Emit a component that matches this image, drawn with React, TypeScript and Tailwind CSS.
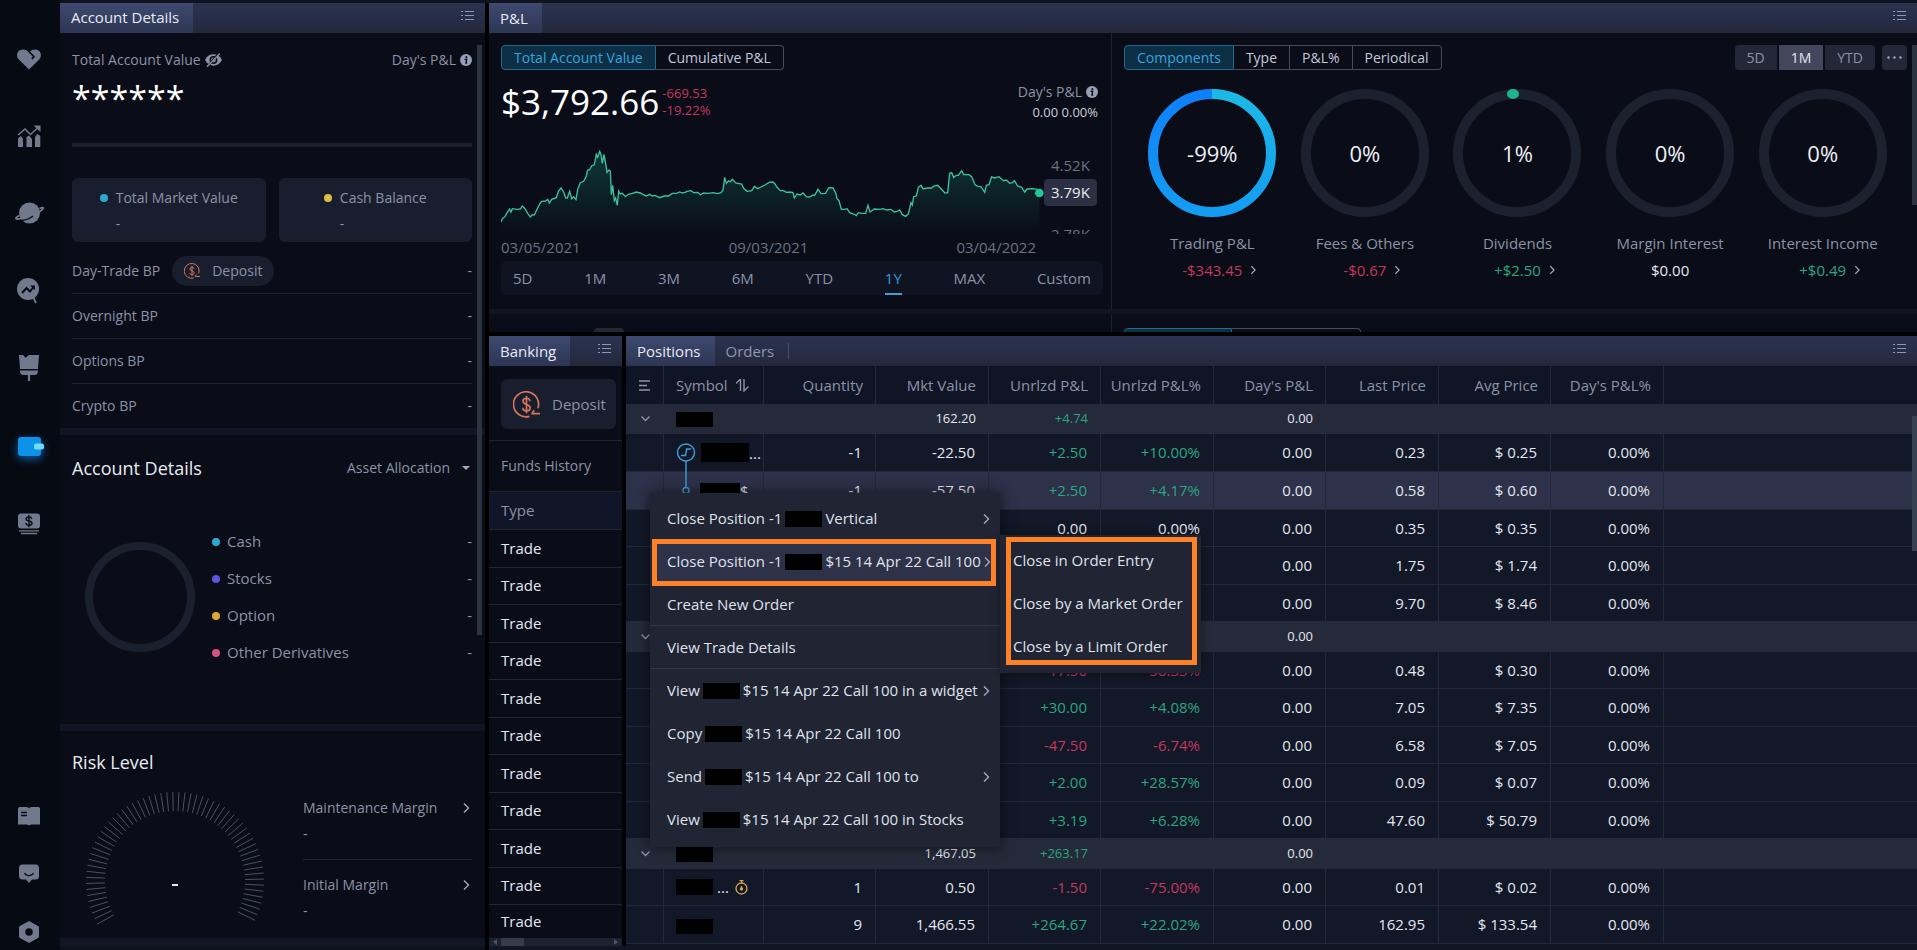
import { useState, type ReactNode } from "react";
import clsx from "clsx";

type Tone = "up" | "down" | "flat";

interface PositionRow {
  kind: "row";
  symbol?: ReactNode;
  quantity?: string;
  mktValue?: string;
  pnl?: string;
  pnlPct?: string;
  last: string;
  avg: string;
  selected?: boolean;
}

interface GroupRow {
  kind: "group";
  mktValue?: string;
  pnl?: string;
}

const toneOf = (value = ""): Tone => (value.startsWith("+") ? "up" : value.startsWith("-") ? "down" : "flat");

const toneClass: Record<Tone, string> = {
  up: "text-[#2aa680]",
  down: "text-[#c4375f]",
  flat: "text-[#e4e7f0]",
};

function Redacted({ className = "h-4 w-[37px]" }: { className?: string }) {
  return <span className={clsx("inline-block shrink-0 bg-black", className)} />;
}

function ListIcon() {
  return (
    <svg width="13" height="11" viewBox="0 0 13 11" stroke="#8e97b8" strokeWidth="1.2">
      <path d="M0 1.5h2M4 1.5h9M0 5.5h2M4 5.5h9M0 9.5h2M4 9.5h9" />
    </svg>
  );
}

function Chevron({ size = 12 }: { size?: number }) {
  return (
    <svg width={size} height={size} viewBox="0 0 12 12" fill="none" stroke="#a2a9bd" strokeWidth="1.4" className="shrink-0">
      <path d="M4 1.5 8.5 6 4 10.5" />
    </svg>
  );
}

function InfoIcon() {
  return (
    <svg width="12" height="12" viewBox="0 0 12 12" className="shrink-0">
      <circle cx="6" cy="6" r="6" fill="#98a0b8" />
      <circle cx="6.4" cy="3" r="1" fill="#0a0d18" />
      <path d="M4.6 5.2h2L6 9h1.2" fill="none" stroke="#0a0d18" strokeWidth="1.4" />
    </svg>
  );
}

function EyeOffIcon() {
  return (
    <svg width="17" height="14" viewBox="0 0 17 14" className="shrink-0">
      <path d="M0 7C2 3 5 1.3 8.5 1.3S15 3 17 7c-2 4-5 5.7-8.5 5.7S2 11 0 7Z" fill="#8b92a6" />
      <circle cx="8.5" cy="7" r="3.9" fill="#0a0d18" />
      <circle cx="8.5" cy="7" r="2.4" fill="#8b92a6" />
      <path d="M13.500.8 2.800 13.200" stroke="#0a0d18" strokeWidth="2.200" />
      <path d="M14.800.5 2 13.800" stroke="#8b92a6" strokeWidth="1.4" />
    </svg>
  );
}

function DepositIcon({ size }: { size: number }) {
  return (
    <svg width={size} height={size} viewBox="0 0 28 28" fill="none" stroke="#d8775a" strokeWidth="1.7" className="shrink-0">
      <path d="M17 26.300A13 13 0 1 1 25.800 18" />
      <path d="M17.500 10.500c0-2-1.500-3-3.500-3s-3.600 1-3.600 3c0 4.200 7.400 2.600 7.400 6.800 0 2-1.600 3.200-3.800 3.200s-3.800-1.200-3.800-3.200M14 5v18" />
      <path d="M20 22.500l2-2.500M19 23.500h9" />
    </svg>
  );
}

function Dot({ className }: { className: string }) {
  return <span className={clsx("size-2 shrink-0 rounded-full", className)} />;
}

/* ---------- sidebar ---------- */

const topNav: { label: string; icon: ReactNode }[] = [
  {
    label: "Watchlist",
    icon: (
      <>
        <path d="M12 22.500 1.800 12.500C-1.800 8.500.500 2.500 6 2.500c2.500 0 4.500 1 6 3 1.500-2 3.500-3 6-3 5.500 0 7.800 6 4.200 10Z" />
        <path d="m12 4.500 5 5.300-2.200 2" fill="none" stroke="#060a12" strokeWidth="1.600" />
      </>
    ),
  },
  {
    label: "Markets",
    icon: (
      <>
        <path d="M1 14.500 3.500 12 6 14.500V23H1ZM9.500 13 12 11.500 15 15v8H9.500ZM18 13l2.500-3 2.800 2V23H18Z" />
        <path d="m1 11 7-6 5.500 5.500L21 3.500" fill="none" stroke="#717a8d" strokeWidth="1.500" />
        <path d="M16.500 1.500H23.500V8Z" />
      </>
    ),
  },
  {
    label: "Explore",
    icon: (
      <>
        <circle cx="12.500" cy="12" r="10.500" />
        <path d="M2.500 14.500C-1 16-2.500 18 .500 18c4.500 0 9-1.500 14-3.500M22.500 7.500c3-1.500 5-1.200 3 .8-.8 1-1.800 1.700-3 2.400" fill="none" stroke="#717a8d" strokeWidth="1.800" />
        <path d="M3 19.300c5 .2 9.500-1.500 13-4.300" fill="none" stroke="#060a12" strokeWidth="1.200" />
      </>
    ),
  },
  {
    label: "Analysis",
    icon: (
      <>
        <circle cx="11" cy="11" r="11" />
        <path d="m16.500 20 2.500 5" stroke="#717a8d" strokeWidth="1.800" />
        <path d="m5 15 4.500-5 3.500 3.500 4-5" fill="none" stroke="#060a12" strokeWidth="2" />
        <path d="M13 7.500h5V12Z" fill="#060a12" />
      </>
    ),
  },
  {
    label: "Screener",
    icon: (
      <>
        <path d="M2 0h4l2.500 2.800L12 0h10l-1 14H3ZM3 15.500h18c0 3.500-1.500 4.500-4 4.500H7c-2.500 0-4-1-4-4.500Z" />
        <path d="M12 19v7" stroke="#717a8d" strokeWidth="2.200" />
      </>
    ),
  },
  {
    label: "Account",
    icon: (
      <>
        <rect x="1" y="5" width="23" height="19" rx="3" fill="#0d92ea" />
        <rect x="17" y="11.500" width="10" height="6" rx="2" fill="#6fdcff" />
      </>
    ),
  },
  {
    label: "Trade",
    icon: (
      <>
        <rect x="1" y="4.500" width="22" height="15" rx="3" />
        <path d="M2 21.800h20M4 24.500h16" stroke="#717a8d" strokeWidth="1.300" />
        <path d="M14.800 9.800c-.3-1.300-1.300-1.900-2.800-1.900s-2.800.7-2.800 2c0 2.800 5.800 1.500 5.800 4.300 0 1.300-1.300 2-3 2s-3-.7-3.200-2.200M12 6v12.200" fill="none" stroke="#060a12" strokeWidth="1.400" />
      </>
    ),
  },
];

const bottomNav: { label: string; icon: ReactNode }[] = [
  {
    label: "News",
    icon: (
      <>
        <path d="M1 5c0-1.500 1-2 3-2h5c1.500 0 2.500.5 3 1.500C12.500 3.500 13.500 3 15 3h5c2 0 3 .5 3 2v15.500h-9l-2 1-2-1H1Z" />
        <path d="M4 8.500h6M4 11.500h6" stroke="#060a12" strokeWidth="1.300" />
      </>
    ),
  },
  {
    label: "Messages",
    icon: (
      <>
        <path d="M2 6c0-2.500 1.500-3.500 3.500-3.500h13C20.500 2.500 22 3.500 22 6v8c0 2.500-1.500 3.500-3.500 3.500H15L12 21l-3-3.500H5.500C3.500 17.500 2 16.500 2 14Z" />
        <path d="M7.500 11c2 3.500 7 3.500 9 0" fill="none" stroke="#060a12" strokeWidth="1.400" />
      </>
    ),
  },
  {
    label: "Settings",
    icon: (
      <>
        <path d="M12 1 21 6c.8.4 1 1 1 1.500v9c0 .6-.3 1.200-1 1.500l-9 5-9-5c-.7-.4-1-1-1-1.500v-9C2 6.900 2.300 6.300 3 6Z" />
        <circle cx="12" cy="12" r="3.800" fill="#060a12" />
      </>
    ),
  },
];

function NavIcon({ children, active }: { children: ReactNode; active?: boolean }) {
  return (
    <svg
      width="24"
      height="24"
      viewBox="0 0 24 24"
      fill="#717a8d"
      className={clsx("overflow-visible", active && "drop-shadow-[0_3px_4px_#0a5aa0]")}
    >
      {children}
    </svg>
  );
}

function Sidebar() {
  return (
    <nav className="flex w-[60px] shrink-0 flex-col justify-between bg-[#060a12] pt-5 pr-0.5 pb-1.5">
      <div className="flex flex-col">
        {topNav.map((n) => (
          <button key={n.label} aria-label={n.label} className="flex h-[77px] items-center justify-center">
            <NavIcon active={n.label === "Account"}>{n.icon}</NavIcon>
          </button>
        ))}
      </div>
      <div className="flex flex-col items-center gap-[34px]">
        {bottomNav.map((n) => (
          <button key={n.label} aria-label={n.label}>
            <NavIcon>{n.icon}</NavIcon>
          </button>
        ))}
      </div>
    </nav>
  );
}

/* ---------- shared panel pieces ---------- */

function PanelHeader({ tabs }: { tabs: string[] }) {
  return (
    <header className="flex h-[30px] shrink-0 items-center justify-between bg-linear-to-b from-[#2a3350] to-[#24283d] pr-[11px]">
      <div className="flex h-full items-center">
        {tabs.map((tab, i) => (
          <button
            key={tab}
            className={clsx(
              "flex h-full items-center pr-3.5 pl-[11px] text-[15px]",
              i === 0 ? "bg-linear-to-b from-[#3e4a70] to-[#2c3553] text-[#e8ebf5]" : "text-[#8f97b3]"
            )}
          >
            {tab}
          </button>
        ))}
        {tabs.length > 1 && <span className="h-4 w-px bg-[#454d68]" />}
      </div>
      <button aria-label="Panel menu" className="pb-1.5">
        <ListIcon />
      </button>
    </header>
  );
}

function Segmented({ items }: { items: string[] }) {
  const [active, setActive] = useState(items[0]);
  return (
    <div className="flex h-[25px] text-sm">
      {items.map((item) => (
        <button
          key={item}
          onClick={() => setActive(item)}
          className={clsx(
            "border px-3 leading-[23px] not-first:border-l-0 first:rounded-l last:rounded-r",
            item === active ? "border-[#23698a] bg-[#0c2f46] text-[#37a3dc]" : "border-[#474c5e] text-[#c3c8d8]"
          )}
        >
          {item}
        </button>
      ))}
    </div>
  );
}

/* ---------- account details ---------- */

const allocation = [
  { name: "Cash", dot: "bg-[#28abd3]" },
  { name: "Stocks", dot: "bg-[#5d55e0]" },
  { name: "Option", dot: "bg-[#dba92b]" },
  { name: "Other Derivatives", dot: "bg-[#d8527f]" },
];

function RiskGauge() {
  const ticks = Array.from({ length: 61 }, (_, i) => ((-209 + i * 3.92) * Math.PI) / 180);
  return (
    <svg width="182" height="142" viewBox="0 0 182 142" className="shrink-0">
      {ticks.map((a) => (
        <line
          key={a}
          x1={91 + 70 * Math.cos(a)}
          y1={91 + 70 * Math.sin(a)}
          x2={91 + 89 * Math.cos(a)}
          y2={91 + 89 * Math.sin(a)}
          stroke="#4a5160"
          strokeWidth="1"
        />
      ))}
      <path d="M88 95h6" stroke="#e4e7f0" strokeWidth="2" />
    </svg>
  );
}

function AccountPanel() {
  return (
    <section className="relative flex w-[425px] shrink-0 flex-col bg-[#0a0d18] text-sm text-[#8b92a6]">
      <PanelHeader tabs={["Account Details"]} />
      <span className="absolute top-[42px] right-[3px] h-[590px] w-[5px] bg-[#2b3341]" />

      <div className="pt-[17px] pr-[13px] pl-3">
        <div className="flex items-center justify-between">
          <span className="flex items-center gap-1">
            Total Account Value <EyeOffIcon />
          </span>
          <span className="flex items-center gap-1">
            Day's P&amp;L <InfoIcon />
          </span>
        </div>
        <p className="mt-[7px] text-[34px] leading-[42px] text-white">******</p>
        <div className="mt-6 h-1 bg-[#1b202d]" />

        <div className="mt-[31px] grid grid-cols-2 gap-[13px]">
          {[
            { name: "Total Market Value", dot: "bg-[#28abd3]" },
            { name: "Cash Balance", dot: "bg-[#dcbc45]" },
          ].map((c) => (
            <div key={c.name} className="flex h-16 justify-center gap-2 rounded-md bg-[#191e2f] pt-2.5">
              <span className="flex h-5 items-center">
                <Dot className={c.dot} />
              </span>
              <div className="flex flex-col gap-1.5">
                <span>{c.name}</span>
                <span>-</span>
              </div>
            </div>
          ))}
        </div>

        <div className="mt-[7px]">
          {["Day-Trade BP", "Overnight BP", "Options BP", "Crypto BP"].map((row, i) => (
            <div key={row} className="flex h-[45px] items-center border-b border-[#1e2330] last:h-11 last:border-b-0">
              <span>{row}</span>
              {i === 0 && (
                <button className="ml-3 flex h-[30px] items-center gap-3 rounded-full bg-[#191e2f] px-3">
                  <DepositIcon size={16} />
                  Deposit
                </button>
              )}
              <span className="ml-auto">-</span>
            </div>
          ))}
        </div>
      </div>

      <div className="h-[7px] bg-[#111525]" />
      <div className="pt-[21px] pr-[13px] pb-[53px] pl-3">
        <div className="flex items-center justify-between">
          <h2 className="text-lg leading-6 text-[#e8ebf3]">Account Details</h2>
          <label className="flex items-center gap-3">
            <select aria-label="Breakdown" className="appearance-none bg-transparent text-right">
              <option>Asset Allocation</option>
            </select>
            <svg width="8" height="4" viewBox="0 0 8 4" fill="#a2a9bd" className="mr-0.5">
              <path d="M0 0h8L4 4Z" />
            </svg>
          </label>
        </div>
        <div className="mt-[43px] flex items-center pl-[13px]">
          <svg width="110" height="110" viewBox="0 0 110 110" fill="none" className="mr-[17px] shrink-0">
            <circle cx="55" cy="55" r="51" stroke="#1a202e" strokeWidth="8" />
          </svg>
          <ul className="flex-1 text-[15px]">
            {allocation.map((a) => (
              <li key={a.name} className="flex h-[37px] items-center gap-[7px]">
                <Dot className={a.dot} />
                <span>{a.name}</span>
                <span className="ml-auto">-</span>
              </li>
            ))}
          </ul>
        </div>
      </div>

      <div className="h-[7px] bg-[#111525]" />
      <div className="pt-[19px] pr-[13px] pb-1.5 pl-3">
        <h2 className="text-lg leading-6 text-[#e8ebf3]">Risk Level</h2>
        <div className="mt-4 flex pl-3">
          <RiskGauge />
          <ul className="ml-[37px] flex-1 pt-2">
            {["Maintenance Margin", "Initial Margin"].map((m) => (
              <li key={m} className="border-[#232836] first:border-b first:pb-[15px] last:pt-[15px]">
                <a href="#" className="flex items-center justify-between">
                  {m} <Chevron />
                </a>
                <p className="mt-1.5">-</p>
              </li>
            ))}
          </ul>
        </div>
      </div>
      <div className="flex-1 border-b-4 border-[#0d121e] bg-[#111525]" />
    </section>
  );
}

/* ---------- P&L ---------- */

const curve =
  "4,246 8,236 16,230 22,218 30,207 34,216 38,206 52,208 62,207 68,198 76,206 84,220 92,231 98,224 104,225 112,208 120,192 126,184 138,183 144,178 149,189 156,178 170,173 176,154 184,144 192,156 198,174 203,174 210,154 216,176 222,170 229,179 234,148 242,128 252,124 260,108 264,90 270,89 276,78 284,74 290,43 294,52 300,34 304,44 308,70 313,43 318,70 322,97 328,90 332,93 335,164 339,136 344,182 348,174 353,196 357,153 362,162 368,160 377,170 386,163 398,160 410,156 422,159 430,163 440,168 450,163 458,168 466,166 480,173 494,168 506,168 518,160 530,160 540,156 548,159 556,157 562,154 574,152 582,158 594,157 602,164 612,159 626,160 640,158 654,161 664,158 670,150 675,112 680,130 686,123 692,125 698,118 708,129 726,132 732,145 742,154 756,152 764,139 774,146 784,141 796,135 808,127 820,126 826,132 832,142 842,152 852,152 860,157 870,156 880,158 884,174 892,162 902,165 910,159 920,170 930,171 940,165 945,166 950,157 955,148 964,161 978,160 983,150 988,143 1000,144 1008,158 1012,176 1018,182 1025,208 1034,208 1042,206 1050,218 1062,222 1070,227 1076,218 1086,220 1098,220 1105,196 1111,216 1124,207 1140,208 1150,206 1160,210 1174,208 1184,216 1192,214 1200,210 1208,224 1218,229 1226,222 1234,188 1238,195 1242,170 1250,168 1256,142 1264,136 1270,146 1286,144 1296,144 1302,138 1314,136 1322,144 1336,159 1344,158 1350,100 1356,98 1362,112 1370,106 1376,106 1386,92 1392,104 1408,104 1416,110 1426,134 1434,139 1444,140 1455,157 1460,136 1468,134 1476,110 1484,114 1498,110 1502,114 1512,122 1520,120 1530,130 1538,128 1544,122 1554,138 1566,142 1575,156 1582,147 1598,146 1612,148 1619,158";

function ValueChart() {
  return (
    <svg width="543" height="100" viewBox="4 0 1629 300" className="min-w-0 shrink overflow-visible" aria-label="Account value, one year">
      <defs>
        <linearGradient id="curve-fill" x1="0" y1="0" x2="0" y2="1">
          <stop offset="0" stopColor="#17a07c" stopOpacity="0.3" />
          <stop offset="1" stopColor="#17a07c" stopOpacity="0" />
        </linearGradient>
      </defs>
      <polygon points={`4,275 ${curve} 1619,275`} fill="url(#curve-fill)" />
      <polyline points={curve} fill="none" stroke="#3fc0a0" strokeWidth="4" />
      <circle cx="1619" cy="159" r="13" fill="#1fc79b" />
    </svg>
  );
}

function AccountValue() {
  const ranges = ["5D", "1M", "3M", "6M", "YTD", "1Y", "MAX", "Custom"];
  return (
    <div className="w-[622px] shrink-0 pt-3 pr-2 pl-3">
      <div className="flex">
        <Segmented items={["Total Account Value", "Cumulative P&L"]} />
      </div>
      <div className="mt-[11px] flex h-[42px] items-center pr-[5px]">
        <span className="text-[35px] leading-[42px] text-white">$3,792.66</span>
        <div className="ml-[3px] text-[13px] leading-[17px] text-[#c4375f]">
          <p>-669.53</p>
          <p>-19.22%</p>
        </div>
        <div className="ml-auto text-right text-[13px] leading-5">
          <p className="flex items-center justify-end gap-1 text-sm text-[#8b92a6]">
            Day's P&amp;L <InfoIcon />
          </p>
          <p className="text-[#c9cedd]">0.00 0.00%</p>
        </div>
      </div>
      <div className="mt-[17px] flex h-[94px] overflow-hidden">
        <ValueChart />
        <div className="flex shrink-0 flex-col items-center text-[15px] text-[#6a7183]">
          <span className="mt-4 leading-[18px]">4.52K</span>
          <span className="mt-[5px] rounded bg-[#2c3042] px-[7px] leading-[27px] text-[#e8ebf3]">3.79K</span>
          <span className="mt-[18px] leading-5">2.78K</span>
        </div>
      </div>
      <div className="mt-[3px] flex w-[535px] justify-between text-[15px] leading-5 text-[#6a7183]">
        <span>03/05/2021</span>
        <span>09/03/2021</span>
        <span>03/04/2022</span>
      </div>
      <div className="mt-1 flex h-[34px] justify-between rounded-md bg-[#101422] px-3 text-[15px] text-[#8b92a6]">
        {ranges.map((r) => (
          <button
            key={r}
            className={clsx("border-y-2 border-t-transparent", r === "1Y" ? "border-b-[#4c9bd0] text-[#2f9bd8]" : "border-b-transparent")}
          >
            {r}
          </button>
        ))}
      </div>
    </div>
  );
}

const components = [
  { label: "Trading P&L", pct: "-99%", value: "-$343.45", link: true },
  { label: "Fees & Others", pct: "0%", value: "-$0.67", link: true },
  { label: "Dividends", pct: "1%", value: "+$2.50", link: true },
  { label: "Margin Interest", pct: "0%", value: "$0.00", link: false },
  { label: "Interest Income", pct: "0%", value: "+$0.49", link: true },
];

function Ring({ pct }: { pct: string }) {
  return (
    <div className="relative">
      <svg width="130" height="130" viewBox="0 0 130 130" fill="none">
        <defs>
          <linearGradient id="ring-right" x1="0" y1="0" x2="0" y2="1">
            <stop offset="0" stopColor="#1cb9e6" />
            <stop offset="1" stopColor="#149cf2" />
          </linearGradient>
          <linearGradient id="ring-left" x1="0" y1="0" x2="0" y2="1">
            <stop offset="0" stopColor="#0f80fb" />
            <stop offset="1" stopColor="#149cf2" />
          </linearGradient>
        </defs>
        <circle cx="65" cy="65" r="59" stroke="#1b212e" strokeWidth="10" />
        {pct === "-99%" && (
          <>
            <path d="M65 6a59 59 0 0 1 0 118" stroke="url(#ring-right)" strokeWidth="10" />
            <path d="M65 124a59 59 0 0 1 0-118" stroke="url(#ring-left)" strokeWidth="10" />
          </>
        )}
        {pct === "1%" && <ellipse cx="61" cy="6" rx="6" ry="5" fill="#1fb58b" />}
      </svg>
      <span className="absolute inset-0 flex items-center justify-center text-[22px] text-[#eef0f6]">{pct}</span>
    </div>
  );
}

function Components() {
  return (
    <div className="relative min-w-0 flex-1 border-l border-[#1d2231] pt-3 pr-2.5 pl-3">
      <span className="absolute top-3 right-0 h-40 w-[5px] bg-[#2b3341]" />
      <div className="flex items-center justify-between">
        <Segmented items={["Components", "Type", "P&L%", "Periodical"]} />
        <div className="flex gap-[7px] text-sm leading-[25px] text-[#8b92a6]">
          <div className="flex gap-0.5 overflow-hidden rounded">
            <button className="bg-[#232737] px-3">5D</button>
            <button className="bg-[#42475c] px-3 text-[#e4e7f0]">1M</button>
            <button className="bg-[#232737] px-3">YTD</button>
          </div>
          <button aria-label="More" className="flex w-[25px] items-center justify-center rounded bg-[#232737]">
            <svg width="15" height="3" viewBox="0 0 15 3" fill="#a2a9bd">
              <circle cx="1.500" cy="1.500" r="1.200" />
              <circle cx="7.500" cy="1.500" r="1.200" />
              <circle cx="13.500" cy="1.500" r="1.200" />
            </svg>
          </button>
        </div>
      </div>
      <div className="mt-[18px] grid grid-cols-5 pr-2 pl-3 text-[15px] leading-5">
        {components.map((c) => (
          <div key={c.label} className="flex flex-col items-center">
            <Ring pct={c.pct} />
            <span className="mt-[15px] whitespace-nowrap text-[#8b92a6]">{c.label}</span>
            <a href="#" className={clsx("relative mt-[7px]", toneClass[toneOf(c.value)])}>
              {c.value}
              {c.link && (
                <span className="absolute top-[5px] left-full ml-1.5">
                  <Chevron size={10} />
                </span>
              )}
            </a>
          </div>
        ))}
      </div>
    </div>
  );
}

function PnlPanel() {
  return (
    <section className="bg-[#0a0d18]">
      <PanelHeader tabs={["P&L"]} />
      <div className="h-[299px] overflow-hidden">
        <div className="flex h-[276px]">
          <AccountValue />
          <Components />
        </div>
        <div className="h-[5px] bg-[#101423]" />
        <div className="flex h-16">
          <div className="w-[622px] shrink-0 pt-3.5 pl-[105px]">
            <div className="h-7 w-[30px] rounded bg-[#232737]" />
          </div>
          <div className="flex flex-1 border-l border-[#1d2231] pt-3.5 pl-3">
            <div className="h-7 w-[108px] rounded-l border border-[#23698a] bg-[#0c2f46]" />
            <div className="h-7 w-[129px] rounded-r border border-l-0 border-[#474c5e]" />
          </div>
        </div>
      </div>
    </section>
  );
}

/* ---------- banking ---------- */

function BankingPanel() {
  return (
    <section className="flex w-[133px] shrink-0 flex-col bg-[#0a0d18]">
      <PanelHeader tabs={["Banking"]} />
      <div className="border-b border-[#1e2330] pt-[13px] pr-1.5 pb-[11px] pl-3">
        <button className="flex h-[50px] w-full items-center gap-3 rounded-md bg-[#191e2f] pl-3 text-[15px] text-[#8b92a6]">
          <DepositIcon size={27} />
          Deposit
        </button>
      </div>
      <p className="border-b border-[#1e2330] pl-3 text-sm leading-[50px] text-[#8b92a6]">Funds History</p>
      <table className="w-full text-left text-[15px]">
        <thead>
          <tr>
            <th className="h-[37px] bg-[#101527] pl-3 font-normal text-[#8b92a6]">Type</th>
          </tr>
        </thead>
        <tbody>
          {Array.from({ length: 11 }, (_, i) => (
            <tr key={i} className="group">
              <td className="h-[38px] border-t border-[#222736] pl-3 text-[#e4e7f0] group-even:h-[37px] group-last:h-[34px]">
                Trade
              </td>
            </tr>
          ))}
        </tbody>
      </table>
      <div className="mt-auto flex h-2 items-center bg-[#1b2231]">
        <svg width="12" height="8" viewBox="0 0 12 8" fill="#4a5365">
          <path d="M8 1v6L4 4Z" />
        </svg>
        <span className="h-full w-[23px] bg-[#343d4c]" />
        <svg width="12" height="8" viewBox="0 0 12 8" fill="#4a5365" className="ml-auto">
          <path d="M4 1v6l4-3Z" />
        </svg>
      </div>
    </section>
  );
}

/* ---------- positions ---------- */

const spreadLeg = (
  <span className="flex items-center gap-1.5">
    <svg width="19" height="37" viewBox="0 0 19 37" fill="none" stroke="#3f9fd6" strokeWidth="1.400" className="shrink-0 overflow-visible">
      <circle cx="10" cy="18.500" r="8.500" />
      <path d="M5 21.500h4.500l1.200-6.500H15" />
      <path d="M10 27V53" />
      <circle cx="10" cy="56.500" r="3" />
    </svg>
    <span className="flex items-center">
      <Redacted className="h-[19px] w-12" />
      ...
    </span>
  </span>
);

const secondLeg = (
  <span className="flex items-center pl-6">
    <Redacted className="h-4 w-10" />$
  </span>
);

const expiring = (
  <span className="flex items-center gap-1">
    <Redacted />
    ...
    <svg width="13" height="15" viewBox="0 0 13 15" fill="none" stroke="#d7a452" strokeWidth="1.300" className="ml-0.5">
      <circle cx="6.500" cy="8.500" r="5.500" />
      <path d="M4.500.7h4M6.500 1v2M6.500 6v2.500" />
      <circle cx="6.500" cy="9" r="1" fill="#d7a452" />
    </svg>
  </span>
);

const block = <Redacted className="h-[15px] w-[37px] align-middle" />;

const rows: (PositionRow | GroupRow)[] = [
  { kind: "group", mktValue: "162.20", pnl: "+4.74" },
  { kind: "row", symbol: spreadLeg, quantity: "-1", mktValue: "-22.50", pnl: "+2.50", pnlPct: "+10.00%", last: "0.23", avg: "0.25" },
  { kind: "row", symbol: secondLeg, quantity: "-1", mktValue: "-57.50", pnl: "+2.50", pnlPct: "+4.17%", last: "0.58", avg: "0.60", selected: true },
  { kind: "row", pnl: "0.00", pnlPct: "0.00%", last: "0.35", avg: "0.35" },
  { kind: "row", last: "1.75", avg: "1.74" },
  { kind: "row", last: "9.70", avg: "8.46" },
  { kind: "group" },
  { kind: "row", pnl: "-17.50", pnlPct: "-58.33%", last: "0.48", avg: "0.30" },
  { kind: "row", pnl: "+30.00", pnlPct: "+4.08%", last: "7.05", avg: "7.35" },
  { kind: "row", pnl: "-47.50", pnlPct: "-6.74%", last: "6.58", avg: "7.05" },
  { kind: "row", pnl: "+2.00", pnlPct: "+28.57%", last: "0.09", avg: "0.07" },
  { kind: "row", pnl: "+3.19", pnlPct: "+6.28%", last: "47.60", avg: "50.79" },
  { kind: "group", mktValue: "1,467.05", pnl: "+263.17" },
  { kind: "row", symbol: expiring, quantity: "1", mktValue: "0.50", pnl: "-1.50", pnlPct: "-75.00%", last: "0.01", avg: "0.02" },
  { kind: "row", symbol: block, quantity: "9", mktValue: "1,466.55", pnl: "+264.67", pnlPct: "+22.02%", last: "162.95", avg: "133.54" },
];

const headings = ["Quantity", "Mkt Value", "Unrlzd P&L", "Unrlzd P&L%", "Day's P&L", "Last Price", "Avg Price", "Day's P&L%"];

const cell = "border-r border-b border-[#232939] pr-[13px]";

function PositionsTable() {
  return (
    <table className="w-full table-fixed border-separate border-spacing-0 text-right text-[15px] text-[#e4e7f0]">
      <colgroup>
        <col className="w-[38px]" />
        <col className="w-[100px]" />
        {headings.map((h, i) => (
          <col key={h} className={i % 2 ? "w-[113px]" : "w-[112px]"} />
        ))}
        <col />
      </colgroup>
      <thead className="bg-[#101526] text-[#8b92a6]">
        <tr>
          <th className="h-[38px] border-r border-[#232939]" aria-label="Expand">
            <svg width="11" height="11" viewBox="0 0 11 11" stroke="#8e95a9" strokeWidth="1.300" className="mx-auto">
              <path d="M0 1h11M0 5.500h8M0 10h11" />
            </svg>
          </th>
          <th className="border-r border-[#232939] pl-3 text-left font-normal">
            <span className="flex items-center gap-2">
              Symbol
              <svg width="13" height="13" viewBox="0 0 13 13" fill="none" stroke="#8e95a9" strokeWidth="1.400">
                <path d="M0 4.500 4.500 0V12M8 0v12l4.500-4.500" />
              </svg>
            </span>
          </th>
          {headings.map((h) => (
            <th key={h} className="border-r border-[#232939] pr-3 font-normal whitespace-nowrap">
              {h}
            </th>
          ))}
          <th />
        </tr>
      </thead>
      <tbody>
        {rows.map((r, i) =>
          r.kind === "group" ? (
            <tr key={i} className="bg-[#242a39] text-[13px]">
              <td className="h-[30px]">
                <svg width="9" height="6" viewBox="0 0 9 6" fill="none" stroke="#8e95a9" strokeWidth="1.300" className="mx-auto">
                  <path d="m.5.5 4 4 4-4" />
                </svg>
              </td>
              <td className="pl-3 text-left">{r.mktValue && block}</td>
              <td />
              <td className="pr-[13px]">{r.mktValue}</td>
              <td className={clsx("pr-[13px]", toneClass[toneOf(r.pnl)])}>{r.pnl}</td>
              <td />
              <td className="pr-[13px]">0.00</td>
              <td colSpan={4} />
            </tr>
          ) : (
            <tr key={i} className={clsx("group", r.selected ? "bg-[#2d3149]" : "bg-[#121827]")}>
              <td className="h-[38px] border-r border-b border-[#232939] group-even:h-[37px]" />
              <td className="border-r border-b border-[#232939] py-0 pl-3 text-left leading-5">{r.symbol}</td>
              <td className={cell}>{r.quantity}</td>
              <td className={cell}>{r.mktValue}</td>
              <td className={clsx(cell, toneClass[toneOf(r.pnl)])}>{r.pnl}</td>
              <td className={clsx(cell, toneClass[toneOf(r.pnlPct)])}>{r.pnlPct}</td>
              <td className={cell}>0.00</td>
              <td className={cell}>{r.last}</td>
              <td className={cell}>$ {r.avg}</td>
              <td className={cell}>0.00%</td>
              <td className="border-b border-[#232939]" />
            </tr>
          )
        )}
      </tbody>
    </table>
  );
}

interface MenuEntry {
  before: string;
  after?: string;
  arrow?: boolean;
  marked?: boolean;
  divider?: boolean;
}

const menuItems: MenuEntry[] = [
  { before: "Close Position -1", after: "Vertical", arrow: true },
  { before: "Close Position -1", after: "$15 14 Apr 22 Call 100", arrow: true, marked: true },
  { before: "Create New Order", divider: true },
  { before: "View Trade Details", divider: true },
  { before: "View", after: "$15 14 Apr 22 Call 100 in a widget", arrow: true },
  { before: "Copy", after: "$15 14 Apr 22 Call 100" },
  { before: "Send", after: "$15 14 Apr 22 Call 100 to", arrow: true },
  { before: "View", after: "$15 14 Apr 22 Call 100 in Stocks" },
];

function ContextMenu() {
  return (
    <div
      role="menu"
      className="absolute top-[157px] left-6 w-[350px] bg-[#212433] pt-1 pb-1.5 text-[15px] text-[#dfe2ec] shadow-[0_0_12px_rgba(0,0,0,0.6)]"
    >
      {menuItems.map((m, i) => (
        <button
          key={i}
          role="menuitem"
          className={clsx(
            "relative flex h-[43px] w-full items-center pr-2 pl-[17px] whitespace-nowrap",
            m.divider && "border-b border-[#30354a]"
          )}
        >
          {m.marked && <span className="absolute -top-px right-1 -bottom-[3px] left-0.5 z-10 border-[5px] border-[#ff8127] bg-[#2e3248]" />}
          <span className="relative z-10 flex items-center gap-[3px]">
            {m.before}
            {m.after && <Redacted />}
            {m.after}
          </span>
          {m.arrow && (
            <span className="relative z-10 ml-auto">
              <Chevron />
            </span>
          )}
        </button>
      ))}
    </div>
  );
}

function SubMenu() {
  return (
    <div
      role="menu"
      className="absolute top-[199px] left-[374px] w-[201px] bg-[#212433] pt-1 pb-[5px] text-[15px] text-[#dfe2ec] shadow-[0_0_8px_rgba(0,0,0,0.4)]"
    >
      <span className="absolute top-0.5 right-1 bottom-2 left-1.5 border-[5px] border-[#ff8127]" />
      {["Close in Order Entry", "Close by a Market Order", "Close by a Limit Order"].map((label) => (
        <button key={label} role="menuitem" className="relative flex h-[43px] w-full items-center pl-[13px] whitespace-nowrap">
          {label}
        </button>
      ))}
    </div>
  );
}

function PositionsPanel() {
  return (
    <section className="relative min-w-0 flex-1 bg-[#101526]">
      <PanelHeader tabs={["Positions", "Orders"]} />
      <PositionsTable />
      <span className="absolute top-[80px] right-0 h-[135px] w-[5px] bg-[#384152]" />
      <ContextMenu />
      <SubMenu />
    </section>
  );
}

export default function App() {
  return (
    <div className="flex min-h-screen bg-black font-['Open_Sans','Noto_Sans',sans-serif]">
      <Sidebar />
      <div className="flex min-w-0 flex-1 flex-col border-t-[3px] border-[#10141f]">
        <div className="flex flex-1 gap-1">
          <AccountPanel />
          <main className="flex min-w-0 flex-1 flex-col gap-1">
            <PnlPanel />
            <div className="flex flex-1 gap-1 border-b-4 border-[#111624]">
              <BankingPanel />
              <PositionsPanel />
            </div>
          </main>
        </div>
      </div>
    </div>
  );
}
